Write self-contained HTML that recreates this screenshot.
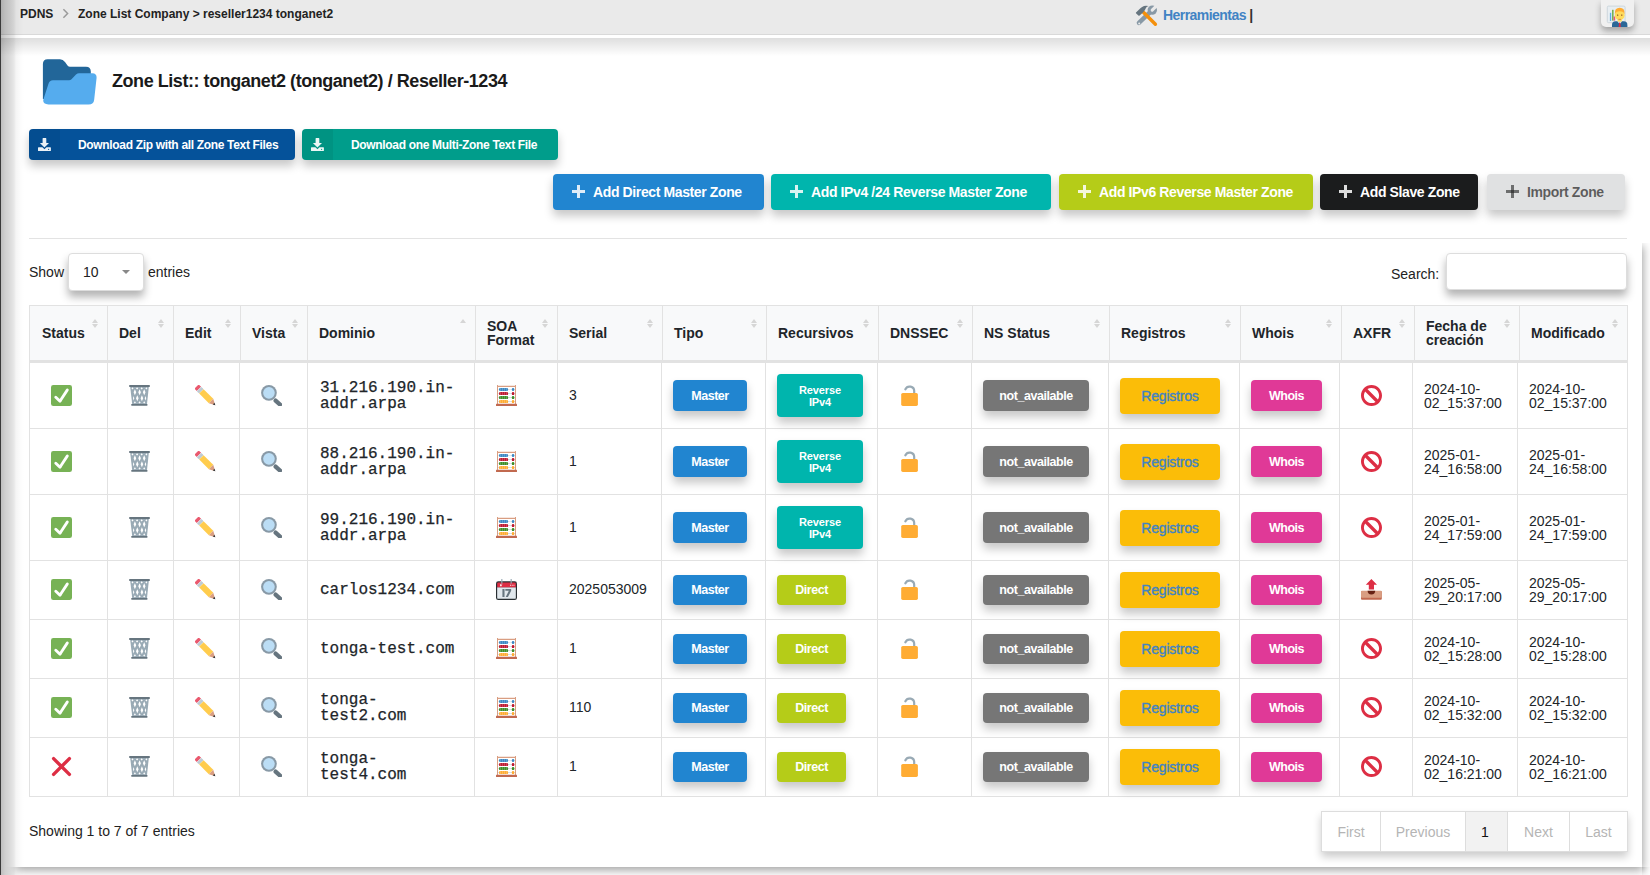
<!DOCTYPE html>
<html><head><meta charset="utf-8"><style>
*{box-sizing:border-box;margin:0;padding:0}
html,body{width:1650px;height:875px;overflow:hidden;background:#fff;font-family:"Liberation Sans",sans-serif;color:#212529;position:relative}
.abs{position:absolute}
svg.abs{overflow:visible}
#bg{left:0;top:0;width:1650px;height:875px;background:#fff}
#card{left:15px;top:38px;width:1627px;height:829px;background:#fff}
#rsh{left:1642px;top:243px;width:8px;height:632px;overflow:hidden}
#rsh i,#bsh i{position:absolute;display:block;background:#fff;box-shadow:1px 3px 9px rgba(0,0,0,.38)}
#bsh{left:0;top:867px;width:1650px;height:8px;overflow:hidden}
#lbar{left:0;top:0;width:1px;height:875px;background:#3a3a3a;z-index:50}
#lshadow{left:1px;top:0;width:24px;height:875px;background:linear-gradient(to right,rgba(0,0,0,.25) 0px,rgba(0,0,0,.19) 4px,rgba(0,0,0,.14) 9px,rgba(0,0,0,.09) 13px,rgba(0,0,0,.04) 15px,rgba(0,0,0,.015) 19px,rgba(0,0,0,0) 23px);z-index:40}
#hdr{left:0;top:0;width:1650px;height:35px;background:#eaeaea;border-bottom:1px solid #d9d9d9}
#hline{left:0;top:35px;width:1650px;height:3px;background:#fff}
#hshadow{left:0;top:38px;width:1650px;height:18px;background:linear-gradient(to bottom,rgba(0,0,0,.13),rgba(0,0,0,0))}
.bc{top:7px;font-size:12px;font-weight:bold;color:#222}
.btn{position:absolute;color:#fff;font-weight:bold;border-radius:4px;box-shadow:0 6px 10px rgba(0,0,0,.22);white-space:nowrap}
.dl .ic{position:absolute;left:0;top:0;width:31px;height:100%;background:rgba(0,0,0,.06);border-radius:4px 0 0 4px}
.dl .t{position:absolute;top:9px;font-size:12px;letter-spacing:-.33px}
.add .t{position:absolute;top:10px;font-size:14px;letter-spacing:-.38px}
.plus{position:absolute;width:13px;height:13px;opacity:.85}
.plus:before{content:"";position:absolute;left:5px;top:0;width:3px;height:13px;background:currentColor}
.plus:after{content:"";position:absolute;left:0;top:5px;width:13px;height:3px;background:currentColor}
#hr{left:29px;top:238px;width:1598px;height:1px;background:#e3e3e3}
.lbl{font-size:14px;color:#222}
#sel{left:68px;top:253px;width:76px;height:38px;border:1px solid #ddd;border-radius:4px;background:#fff;box-shadow:0 6px 9px rgba(0,0,0,.3)}
#srch{left:1446px;top:253px;width:181px;height:37px;border:1px solid #ddd;border-radius:4px;background:#fff;box-shadow:0 6px 9px rgba(0,0,0,.3)}
.hl{position:absolute;height:1px;background:#e2e2e2}
.vl{position:absolute;width:1px;background:#e2e2e2}
.th{position:absolute;font-size:14px;font-weight:bold;line-height:14px;color:#212529;white-space:nowrap}
.srt{position:absolute;width:0;height:0;border-left:3.5px solid transparent;border-right:3.5px solid transparent}
.srt.up{border-bottom:4px solid #d6d6d6}
.srt.dn{border-top:4px solid #d6d6d6}
.dom{position:absolute;font-family:"Liberation Mono",monospace;font-size:16px;line-height:16px;color:#212529;white-space:nowrap;-webkit-text-stroke:.25px #212529}
.td{position:absolute;font-size:14px;line-height:16px;color:#212529}
.dt{position:absolute;font-size:14px;line-height:14px;color:#212529;white-space:nowrap}
.sb{position:absolute;border-radius:4px;color:#fff;font-weight:bold;font-size:12.5px;text-align:center;box-shadow:0 6px 10px rgba(0,0,0,.22);display:flex;align-items:center;justify-content:center;letter-spacing:-.45px}
.sb.two{font-size:11px;line-height:12px;letter-spacing:-.1px}
.sb.reg{font-size:14px;font-weight:normal;color:#4183c4;letter-spacing:-.2px;-webkit-text-stroke:.35px #4183c4}
.pg{position:absolute;top:0;height:39px;line-height:41px;text-align:center;font-size:14px;color:#b5b5b5}
</style></head><body>
<svg width="0" height="0" style="position:absolute">
<symbol id="i-check" viewBox="0 0 36 36"><path fill="#77B255" d="M36 32a4 4 0 0 1-4 4H4a4 4 0 0 1-4-4V4a4 4 0 0 1 4-4h28a4 4 0 0 1 4 4v28z"/><path fill="#FFF" d="M29.28 6.362a2.502 2.502 0 0 0-3.458.736L14.936 23.877l-5.029-4.65a2.5 2.5 0 1 0-3.394 3.671l7.209 6.666c.48.445 1.09.665 1.696.665.673 0 1.534-.282 2.099-1.139.332-.506 12.5-19.27 12.5-19.27a2.5 2.5 0 0 0-.737-3.458z"/></symbol>
<symbol id="i-cross" viewBox="0 0 21 21"><path stroke="#DD2E44" stroke-width="3.4" stroke-linecap="round" d="M2.6 2.6L18.4 18.4M18.4 2.6L2.6 18.4"/></symbol>
<symbol id="i-trash" viewBox="0 0 21 21"><path fill="#99AAB5" d="M1.2 1.9H19.8L18 19H3.2Z"/><g fill="#fff"><path d="M5.9 4.2l1.3 3 -1.3 3 -1.3 -3zM10.6 4.2l1.3 3 -1.3 3 -1.3 -3zM15.2 4.2l1.3 3 -1.3 3 -1.3 -3zM8.3 10.2l1.3 3 -1.3 3 -1.3 -3zM12.9 10.2l1.3 3 -1.3 3 -1.3 -3zM4.4 11l.9 2.2 -.7 2.4 -.6 -2.4zM16.6 11l.6 2.2 -.6 2.4 -.9 -2.4zM3.5 2.2l1 1.2 -1 1.2 -1 -1.2zM8.1 2.2l1.1 1.2 -1.1 1.2 -1.1 -1.2zM12.7 2.2l1.1 1.2 -1.1 1.2 -1.1 -1.2zM17.4 2.2l1 1.2 -1 1.2 -1 -1.2zM5.9 16.2l1 1.2 -1 1.2 -1 -1.2zM10.6 16.2l1.1 1.2 -1.1 1.2 -1.1 -1.2zM15.2 16.2l1 1.2 -1 1.2 -1 -1.2z"/></g><path fill="#66757F" d="M.9 0H20.1Q21 0 21 1Q21 2 20.1 2H.9Q0 2 0 1Q0 0 .9 0ZM2.9 18.9H17.8Q18.6 18.9 18.6 19.85Q18.6 20.8 17.8 20.8H2.9Q2.1 20.8 2.1 19.85Q2.1 18.9 2.9 18.9Z"/></symbol>
<symbol id="i-pencil" viewBox="0 0 21 21"><g transform="translate(10.9 10.9) rotate(45)"><path fill="#EA596E" d="M-9.8 -3H-12Q-13.2 -3 -13.2 -1.8V1.8Q-13.2 3 -12 3H-9.8Z"/><path fill="#CCD6DD" d="M-9.8 -3.1H-6.4V3.1H-9.8Z"/><path fill="#99AAB5" d="M-8.9 -3.1h.5v6.2h-.5zM-7.6 -3.1h.5v6.2h-.5z" opacity=".6"/><path fill="#FFCC4D" d="M-6.4 -3.1H7.3V3.1H-6.4Z"/><path fill="#D99E82" d="M7.3 -3.1L13.2 0L7.3 3.1Z"/><path fill="#292F33" d="M11 -1.15L13.3 0L11 1.15Z"/></g></symbol>
<symbol id="i-mag" viewBox="0 0 21 21"><path stroke="#66757F" stroke-width="4.2" stroke-linecap="round" d="M14.6 15.6L19 19.6"/><circle fill="#8899A6" cx="7.95" cy="7.85" r="7.85"/><circle fill="#BBDDF5" cx="7.95" cy="7.85" r="5.8"/></symbol>
<symbol id="i-abacus" viewBox="0 0 21 21"><path fill="#D99E82" d="M1 0h1v19H1zM19 0h1v19h-1zM1 .8h19v1.1H1z"/><path fill="#CCD6DD" d="M2 4.2h17v.6H2zM2 8.3h17v.6H2zM2 12.3h17v.6H2zM2 16.3h17v.6H2z"/><rect fill="#3B88C3" x="3" y="3" width="9.1" height="3" rx="1.2"/><rect fill="#3B88C3" x="15.8" y="3" width="2.5" height="3" rx="1.2"/><rect fill="#BE1931" x="3" y="7.1" width="9.1" height="3" rx="1.2"/><rect fill="#BE1931" x="15.8" y="7.1" width="2.5" height="3" rx="1.2"/><rect fill="#3E8E28" x="3" y="11.1" width="9.1" height="3" rx="1.2"/><rect fill="#3E8E28" x="15.8" y="11.1" width="2.5" height="3" rx="1.2"/><rect fill="#FFAC33" x="3" y="15.1" width="9.1" height="3" rx="1.2"/><rect fill="#FFAC33" x="15.8" y="15.1" width="2.5" height="3" rx="1.2"/><path fill="#fff" opacity=".55" d="M4.65 3h.35v3h-.35zM6.45 3h.35v3h-.35zM8.25 3h.35v3h-.35zM10.05 3h.35v3h-.35zM4.65 7.1h.35v3h-.35zM6.45 7.1h.35v3h-.35zM8.25 7.1h.35v3h-.35zM10.05 7.1h.35v3h-.35zM4.65 11.1h.35v3h-.35zM6.45 11.1h.35v3h-.35zM8.25 11.1h.35v3h-.35zM10.05 11.1h.35v3h-.35zM4.65 15.1h.35v3h-.35zM6.45 15.1h.35v3h-.35zM8.25 15.1h.35v3h-.35zM10.05 15.1h.35v3h-.35z"/><rect fill="#C1694F" x="0" y="18.8" width="21" height="2.1" rx=".5"/></symbol>
<symbol id="i-cal" viewBox="0 0 36 36"><path fill="#292F33" d="M36 32a4 4 0 0 1-4 4H4a4 4 0 0 1-4-4V8a4 4 0 0 1 4-4h28a4 4 0 0 1 4 4v24z"/><path fill="#E1E8ED" d="M2 14h32v18a2 2 0 0 1-2 2H4a2 2 0 0 1-2-2z"/><path fill="#DD2E44" d="M2 8a2 2 0 0 1 2-2h28a2 2 0 0 1 2 2v6H2z"/><path fill="#FFF" d="M7 9h1.5v3.5H7zM9.5 9h1.2l-.8 3.5H8.8zM24 10h1.5v1.5H24zM27 10h1.5v1.5H27zM30 10h1.5v1.5H30z"/><path fill="#99AAB5" d="M9 0h2v8H9zM25 0h2v8h-2z"/><path fill="#66757F" d="M11 17h3.6v14H11zM16 17h10v3l-5.5 11h-3.8L22 20h-6z"/></symbol>
<symbol id="i-lock" viewBox="0 0 21 21"><path fill="none" stroke="#99AAB5" stroke-width="2.2" stroke-linecap="round" d="M6.4 4.3A4.6 4.6 0 0 1 15.2 6.3V9.5"/><rect fill="#FFAC33" x="2.2" y="8" width="16.7" height="12.9" rx="1.6"/></symbol>
<symbol id="i-noentry" viewBox="0 0 36 36"><path fill="#DD2E44" d="M18 0C8.059 0 0 8.059 0 18s8.059 18 18 18 18-8.059 18-18S27.941 0 18 0zm13 18c0 2.565-.753 4.95-2.035 6.965L11.036 7.036C13.05 5.753 15.435 5 18 5c7.18 0 13 5.821 13 13zM5 18c0-2.565.753-4.95 2.036-6.964l17.929 17.929A12.93 12.93 0 0 1 18 31c-7.179 0-13-5.82-13-13z"/></symbol>
<symbol id="i-outbox" viewBox="0 0 21 21"><rect fill="#C1694F" x="0" y="12" width="20.8" height="8.8" rx="1"/><rect fill="#D99E82" x="0" y="11.8" width="20.8" height="6.9" rx="1"/><path fill="#662113" d="M6.6 11.8H14.2Q14.2 15.4 10.4 15.4Q6.6 15.4 6.6 11.8Z"/><path fill="#DD2E44" d="M10.4 0L16 5.8H13V10.4H7.8V5.8H4.8Z"/></symbol>
</svg>
<div id="bg" class="abs"></div>
<div id="card" class="abs"></div>
<div id="rsh" class="abs"><i style="left:-1627px;top:0;width:1627px;height:624px"></i></div>
<div id="bsh" class="abs"><i style="left:15px;top:-629px;width:1627px;height:629px"></i></div>
<div id="lbar" class="abs"></div>
<div id="lshadow" class="abs"></div>
<div id="hdr" class="abs"></div>
<div id="hline" class="abs"></div>
<div id="hshadow" class="abs"></div>
<div class="abs bc" style="left:20px">PDNS</div>
<svg class="abs" style="left:62px;top:8px;width:8px;height:11px" viewBox="0 0 8 11"><path d="M1.4 1.2L5.6 5.5L1.4 9.8" fill="none" stroke="#9a9a9a" stroke-width="1.5"/></svg>
<div class="abs bc" style="left:78px">Zone List Company &gt; reseller1234 tonganet2</div>
<svg class="abs" style="left:1133px;top:3px;width:28px;height:26px" viewBox="0 0 28 26"><path d="M5.9 19.9L16.6 9.7" stroke="#8899A6" stroke-width="4.4" stroke-linecap="round"/><circle cx="19.3" cy="7.1" r="4.7" fill="#8899A6"/><path d="M19.2 7.2L23.5 2.9" stroke="#eaeaea" stroke-width="3.1" stroke-linecap="round"/><circle cx="6.2" cy="20.4" r="1" fill="#eaeaea"/><path d="M10.4 9.2L22.4 21.2" stroke="#F4900C" stroke-width="3.4" stroke-linecap="round"/><path fill="#66757F" d="M3 9.4Q2.6 10 3.2 10.6L5.4 12.6Q6 13 6.6 12.5L9.2 10.3L11.6 7.6Q12.4 6.2 12.9 5Q13.6 3.6 15.6 3.1Q13 2.3 11 3Q9 3.8 7.4 5.3Z"/></svg>
<div class="abs" style="left:1163px;top:7px;font-size:14px;font-weight:bold;color:#4183c4;letter-spacing:-.55px">Herramientas <span style="color:#333">|</span></div>
<div class="abs" style="left:1601px;top:0px;width:33px;height:27px;background:#f0f0f0;border-radius:0 0 5px 5px;box-shadow:0 4px 6px rgba(0,0,0,.3)"></div>
<svg class="abs" style="left:1601px;top:0;width:33px;height:27px" viewBox="0 0 33 27"><rect x="6.3" y="6.1" width="17.8" height="16.6" rx="1.2" fill="#E8EEF2" stroke="#C5D0D8" stroke-width=".8"/><rect x="8.9" y="12.8" width="1.3" height="8.2" fill="#5DADEC"/><rect x="11" y="9.8" width="1.6" height="10.8" fill="#77B255"/><rect x="12.6" y="16.5" width="1.6" height="4.1" fill="#EA596E"/><path d="M11 27V25Q11 21.3 14.6 21.3H22.8Q26.4 21.3 26.4 25V27Z" fill="#2A6797"/><path d="M16.4 21.3L18.7 24.3L21 21.3Z" fill="#fff"/><path d="M18.1 22.4H19.3L19.8 27H17.6Z" fill="#DD2E44"/><rect x="16.6" y="18.3" width="4.2" height="3.3" fill="#FFDC5D"/><circle cx="18.7" cy="15.2" r="4.9" fill="#FFDC5D"/><path d="M13.8 14.2Q13.4 7.8 18.7 7.8Q24 7.8 23.6 14.2Q22.6 11.3 18.7 11.2Q14.8 11.3 13.8 14.2Z" fill="#FFAC33"/><circle cx="16.7" cy="15.1" r=".65" fill="#662113"/><circle cx="20.8" cy="15.1" r=".65" fill="#662113"/><rect x="17.4" y="18.9" width="2.7" height=".7" fill="#C1694F"/></svg>
<svg class="abs" style="left:38px;top:55px;width:64px;height:54px" viewBox="0 0 64 54"><path fill="#226699" d="M4.9 9Q4.9 4.3 9.6 4.3H22Q25 4.3 27 7L29.5 10.5Q30.5 11.7 32 11.7H48Q52.8 11.7 52.8 16.5V44H4.9Z"/><path fill="#55ACEE" d="M15 25.3H31Q32.5 25.3 33.5 24.3L38 19.5Q39.5 18.2 41 18.2H54.3Q58.8 18.2 58.6 22.8L56.2 44.4Q55.8 49.4 50.6 49.4H10.5Q5 49.4 5.2 45L10.4 29Q11.5 25.3 15 25.3Z"/></svg>
<div class="abs" style="left:112px;top:71px;font-size:18px;letter-spacing:-.45px;font-weight:bold;color:#1a1a1a">Zone List:: tonganet2 (tonganet2) / Reseller-1234</div>

<div class="btn dl" style="left:29px;top:129px;width:266px;height:31px;background:#05529a"><div class="ic"></div><svg style="position:absolute;left:9px;top:9px;width:13px;height:13px" viewBox="0 0 13 13"><path fill="#fff" fill-opacity=".92" d="M4.6 .4Q4.6 0 5 0H7.9Q8.3 0 8.3 .4V5H11L6.45 9.6L1.9 5H4.6ZM0 9.8Q0 9.2 .6 9.2H4.4L6.45 11.2L8.5 9.2H12.3Q12.9 9.2 12.9 9.8V12.4Q12.9 13 12.3 13H.6Q0 13 0 12.4Z"/><circle fill="#05529a" cx="10.6" cy="11.3" r=".65"/></svg><span class="t" style="left:49px">Download Zip with all Zone Text Files</span></div>
<div class="btn dl" style="left:302px;top:129px;width:256px;height:31px;background:#009d8b"><div class="ic"></div><svg style="position:absolute;left:9px;top:9px;width:13px;height:13px" viewBox="0 0 13 13"><path fill="#fff" fill-opacity=".92" d="M4.6 .4Q4.6 0 5 0H7.9Q8.3 0 8.3 .4V5H11L6.45 9.6L1.9 5H4.6ZM0 9.8Q0 9.2 .6 9.2H4.4L6.45 11.2L8.5 9.2H12.3Q12.9 9.2 12.9 9.8V12.4Q12.9 13 12.3 13H.6Q0 13 0 12.4Z"/><circle fill="#009d8b" cx="10.6" cy="11.3" r=".65"/></svg><span class="t" style="left:49px">Download one Multi-Zone Text File</span></div>

<div class="btn add" style="left:553px;top:174px;width:211px;height:36px;background:#2185d0"><span class="plus" style="left:19px;top:11px"></span><span class="t" style="left:40px">Add Direct Master Zone</span></div>
<div class="btn add" style="left:771px;top:174px;width:280px;height:36px;background:#00b5ad"><span class="plus" style="left:19px;top:11px"></span><span class="t" style="left:40px">Add IPv4 /24 Reverse Master Zone</span></div>
<div class="btn add" style="left:1059px;top:174px;width:254px;height:36px;background:#b5cc18"><span class="plus" style="left:19px;top:11px"></span><span class="t" style="left:40px">Add IPv6 Reverse Master Zone</span></div>
<div class="btn add" style="left:1320px;top:174px;width:158px;height:36px;background:#1b1c1d"><span class="plus" style="left:19px;top:11px"></span><span class="t" style="left:40px">Add Slave Zone</span></div>
<div class="btn add" style="left:1487px;top:174px;width:138px;height:36px;background:#e0e1e2;color:rgba(0,0,0,.6)"><span class="plus" style="left:19px;top:11px"></span><span class="t" style="left:40px">Import Zone</span></div>

<div id="hr" class="abs"></div>

<div class="abs lbl" style="left:29px;top:264px">Show</div>
<div id="sel" class="abs"><span style="position:absolute;left:14px;top:10px;font-size:14px;color:#222">10</span><span style="position:absolute;left:53px;top:16px;width:0;height:0;border-left:4px solid transparent;border-right:4px solid transparent;border-top:4px solid #888"></span></div>
<div class="abs lbl" style="left:148px;top:264px">entries</div>
<div class="abs lbl" style="left:1391px;top:266px">Search:</div>
<div id="srch" class="abs"></div>
<div class="abs" style="left:29px;top:305px;width:1598px;height:55px;background:#f8f9fa"></div>
<div class="hl" style="top:305px;left:29px;width:1598px"></div><div class="hl" style="top:360px;left:29px;width:1598px;height:3px"></div><div class="hl" style="top:428px;left:29px;width:1598px"></div><div class="hl" style="top:494px;left:29px;width:1598px"></div><div class="hl" style="top:560px;left:29px;width:1598px"></div><div class="hl" style="top:619px;left:29px;width:1598px"></div><div class="hl" style="top:678px;left:29px;width:1598px"></div><div class="hl" style="top:737px;left:29px;width:1598px"></div><div class="hl" style="top:796px;left:29px;width:1598px"></div><div class="vl" style="left:29px;top:360px;height:437px"></div><div class="vl" style="left:107px;top:360px;height:437px"></div><div class="vl" style="left:173px;top:360px;height:437px"></div><div class="vl" style="left:239px;top:360px;height:437px"></div><div class="vl" style="left:307px;top:360px;height:437px"></div><div class="vl" style="left:474px;top:360px;height:437px"></div><div class="vl" style="left:557px;top:360px;height:437px"></div><div class="vl" style="left:661px;top:360px;height:437px"></div><div class="vl" style="left:765px;top:360px;height:437px"></div><div class="vl" style="left:877px;top:360px;height:437px"></div><div class="vl" style="left:971px;top:360px;height:437px"></div><div class="vl" style="left:1108px;top:360px;height:437px"></div><div class="vl" style="left:1239px;top:360px;height:437px"></div><div class="vl" style="left:1339px;top:360px;height:437px"></div><div class="vl" style="left:1412px;top:360px;height:437px"></div><div class="vl" style="left:1517px;top:360px;height:437px"></div><div class="vl" style="left:1627px;top:360px;height:437px"></div><div class="vl" style="left:29px;top:305px;height:55px"></div><div class="vl" style="left:107px;top:305px;height:55px"></div><div class="vl" style="left:173px;top:305px;height:55px"></div><div class="vl" style="left:240px;top:305px;height:55px"></div><div class="vl" style="left:307px;top:305px;height:55px"></div><div class="vl" style="left:475px;top:305px;height:55px"></div><div class="vl" style="left:557px;top:305px;height:55px"></div><div class="vl" style="left:662px;top:305px;height:55px"></div><div class="vl" style="left:766px;top:305px;height:55px"></div><div class="vl" style="left:878px;top:305px;height:55px"></div><div class="vl" style="left:972px;top:305px;height:55px"></div><div class="vl" style="left:1109px;top:305px;height:55px"></div><div class="vl" style="left:1240px;top:305px;height:55px"></div><div class="vl" style="left:1341px;top:305px;height:55px"></div><div class="vl" style="left:1414px;top:305px;height:55px"></div><div class="vl" style="left:1519px;top:305px;height:55px"></div><div class="vl" style="left:1627px;top:305px;height:55px"></div>
<div class="th" style="left:42px;top:326px">Status</div><div class="srt up" style="left:92px;top:319px"></div><div class="srt dn" style="left:92px;top:324px"></div><div class="th" style="left:119px;top:326px">Del</div><div class="srt up" style="left:158px;top:319px"></div><div class="srt dn" style="left:158px;top:324px"></div><div class="th" style="left:185px;top:326px">Edit</div><div class="srt up" style="left:225px;top:319px"></div><div class="srt dn" style="left:225px;top:324px"></div><div class="th" style="left:252px;top:326px">Vista</div><div class="srt up" style="left:292px;top:319px"></div><div class="srt dn" style="left:292px;top:324px"></div><div class="th" style="left:319px;top:326px">Dominio</div><div class="srt up" style="left:460px;top:319px"></div><div class="th" style="left:487px;top:319px">SOA<br>Format</div><div class="srt up" style="left:542px;top:319px"></div><div class="srt dn" style="left:542px;top:324px"></div><div class="th" style="left:569px;top:326px">Serial</div><div class="srt up" style="left:647px;top:319px"></div><div class="srt dn" style="left:647px;top:324px"></div><div class="th" style="left:674px;top:326px">Tipo</div><div class="srt up" style="left:751px;top:319px"></div><div class="srt dn" style="left:751px;top:324px"></div><div class="th" style="left:778px;top:326px">Recursivos</div><div class="srt up" style="left:863px;top:319px"></div><div class="srt dn" style="left:863px;top:324px"></div><div class="th" style="left:890px;top:326px">DNSSEC</div><div class="srt up" style="left:957px;top:319px"></div><div class="srt dn" style="left:957px;top:324px"></div><div class="th" style="left:984px;top:326px">NS Status</div><div class="srt up" style="left:1094px;top:319px"></div><div class="srt dn" style="left:1094px;top:324px"></div><div class="th" style="left:1121px;top:326px">Registros</div><div class="srt up" style="left:1225px;top:319px"></div><div class="srt dn" style="left:1225px;top:324px"></div><div class="th" style="left:1252px;top:326px">Whois</div><div class="srt up" style="left:1326px;top:319px"></div><div class="srt dn" style="left:1326px;top:324px"></div><div class="th" style="left:1353px;top:326px">AXFR</div><div class="srt up" style="left:1399px;top:319px"></div><div class="srt dn" style="left:1399px;top:324px"></div><div class="th" style="left:1426px;top:319px">Fecha de<br>creaci&oacute;n</div><div class="srt up" style="left:1504px;top:319px"></div><div class="srt dn" style="left:1504px;top:324px"></div><div class="th" style="left:1531px;top:326px">Modificado</div><div class="srt up" style="left:1612px;top:319px"></div><div class="srt dn" style="left:1612px;top:324px"></div>
<svg class="abs" style="left:51px;top:385px;width:21px;height:21px"><use href="#i-check"/></svg><svg class="abs" style="left:129px;top:385px;width:21px;height:21px"><use href="#i-trash"/></svg><svg class="abs" style="left:195px;top:385px;width:21px;height:21px"><use href="#i-pencil"/></svg><svg class="abs" style="left:261px;top:385px;width:21px;height:21px"><use href="#i-mag"/></svg><div class="dom" style="left:320px;top:380px">31.216.190.in-<br>addr.arpa</div><svg class="abs" style="left:496px;top:385px;width:21px;height:21px"><use href="#i-abacus"/></svg><div class="td" style="left:569px;top:387px">3</div><div class="sb" style="left:673px;top:380px;width:74px;height:31px;background:#2185d0"><span>Master</span></div><div class="sb two" style="left:777px;top:374px;width:86px;height:43px;background:#00b5ad"><span>Reverse<br>IPv4</span></div><svg class="abs" style="left:899px;top:385px;width:21px;height:21px"><use href="#i-lock"/></svg><div class="sb" style="left:983px;top:380px;width:106px;height:31px;background:#767676"><span>not_available</span></div><div class="sb reg" style="left:1120px;top:378px;width:100px;height:36px;background:#fbbd08"><span>Registros</span></div><div class="sb" style="left:1251px;top:380px;width:71px;height:31px;background:#e03997"><span>Whois</span></div><svg class="abs" style="left:1361px;top:385px;width:21px;height:21px"><use href="#i-noentry"/></svg><div class="dt" style="left:1424px;top:382px">2024-10-<br>02_15:37:00</div><div class="dt" style="left:1529px;top:382px">2024-10-<br>02_15:37:00</div>
<svg class="abs" style="left:51px;top:451px;width:21px;height:21px"><use href="#i-check"/></svg><svg class="abs" style="left:129px;top:451px;width:21px;height:21px"><use href="#i-trash"/></svg><svg class="abs" style="left:195px;top:451px;width:21px;height:21px"><use href="#i-pencil"/></svg><svg class="abs" style="left:261px;top:451px;width:21px;height:21px"><use href="#i-mag"/></svg><div class="dom" style="left:320px;top:446px">88.216.190.in-<br>addr.arpa</div><svg class="abs" style="left:496px;top:451px;width:21px;height:21px"><use href="#i-abacus"/></svg><div class="td" style="left:569px;top:453px">1</div><div class="sb" style="left:673px;top:446px;width:74px;height:31px;background:#2185d0"><span>Master</span></div><div class="sb two" style="left:777px;top:440px;width:86px;height:43px;background:#00b5ad"><span>Reverse<br>IPv4</span></div><svg class="abs" style="left:899px;top:451px;width:21px;height:21px"><use href="#i-lock"/></svg><div class="sb" style="left:983px;top:446px;width:106px;height:31px;background:#767676"><span>not_available</span></div><div class="sb reg" style="left:1120px;top:444px;width:100px;height:36px;background:#fbbd08"><span>Registros</span></div><div class="sb" style="left:1251px;top:446px;width:71px;height:31px;background:#e03997"><span>Whois</span></div><svg class="abs" style="left:1361px;top:451px;width:21px;height:21px"><use href="#i-noentry"/></svg><div class="dt" style="left:1424px;top:448px">2025-01-<br>24_16:58:00</div><div class="dt" style="left:1529px;top:448px">2025-01-<br>24_16:58:00</div>
<svg class="abs" style="left:51px;top:517px;width:21px;height:21px"><use href="#i-check"/></svg><svg class="abs" style="left:129px;top:517px;width:21px;height:21px"><use href="#i-trash"/></svg><svg class="abs" style="left:195px;top:517px;width:21px;height:21px"><use href="#i-pencil"/></svg><svg class="abs" style="left:261px;top:517px;width:21px;height:21px"><use href="#i-mag"/></svg><div class="dom" style="left:320px;top:512px">99.216.190.in-<br>addr.arpa</div><svg class="abs" style="left:496px;top:517px;width:21px;height:21px"><use href="#i-abacus"/></svg><div class="td" style="left:569px;top:519px">1</div><div class="sb" style="left:673px;top:512px;width:74px;height:31px;background:#2185d0"><span>Master</span></div><div class="sb two" style="left:777px;top:506px;width:86px;height:43px;background:#00b5ad"><span>Reverse<br>IPv4</span></div><svg class="abs" style="left:899px;top:517px;width:21px;height:21px"><use href="#i-lock"/></svg><div class="sb" style="left:983px;top:512px;width:106px;height:31px;background:#767676"><span>not_available</span></div><div class="sb reg" style="left:1120px;top:510px;width:100px;height:36px;background:#fbbd08"><span>Registros</span></div><div class="sb" style="left:1251px;top:512px;width:71px;height:31px;background:#e03997"><span>Whois</span></div><svg class="abs" style="left:1361px;top:517px;width:21px;height:21px"><use href="#i-noentry"/></svg><div class="dt" style="left:1424px;top:514px">2025-01-<br>24_17:59:00</div><div class="dt" style="left:1529px;top:514px">2025-01-<br>24_17:59:00</div>
<svg class="abs" style="left:51px;top:579px;width:21px;height:21px"><use href="#i-check"/></svg><svg class="abs" style="left:129px;top:579px;width:21px;height:21px"><use href="#i-trash"/></svg><svg class="abs" style="left:195px;top:579px;width:21px;height:21px"><use href="#i-pencil"/></svg><svg class="abs" style="left:261px;top:579px;width:21px;height:21px"><use href="#i-mag"/></svg><div class="dom" style="left:320px;top:582px">carlos1234.com</div><svg class="abs" style="left:496px;top:579px;width:21px;height:21px"><use href="#i-cal"/></svg><div class="td" style="left:569px;top:581px">2025053009</div><div class="sb" style="left:673px;top:575px;width:74px;height:30px;background:#2185d0"><span>Master</span></div><div class="sb" style="left:777px;top:575px;width:69px;height:30px;background:#b5cc18"><span>Direct</span></div><svg class="abs" style="left:899px;top:579px;width:21px;height:21px"><use href="#i-lock"/></svg><div class="sb" style="left:983px;top:575px;width:106px;height:30px;background:#767676"><span>not_available</span></div><div class="sb reg" style="left:1120px;top:572px;width:100px;height:36px;background:#fbbd08"><span>Registros</span></div><div class="sb" style="left:1251px;top:575px;width:71px;height:30px;background:#e03997"><span>Whois</span></div><svg class="abs" style="left:1361px;top:579px;width:21px;height:21px"><use href="#i-outbox"/></svg><div class="dt" style="left:1424px;top:576px">2025-05-<br>29_20:17:00</div><div class="dt" style="left:1529px;top:576px">2025-05-<br>29_20:17:00</div>
<svg class="abs" style="left:51px;top:638px;width:21px;height:21px"><use href="#i-check"/></svg><svg class="abs" style="left:129px;top:638px;width:21px;height:21px"><use href="#i-trash"/></svg><svg class="abs" style="left:195px;top:638px;width:21px;height:21px"><use href="#i-pencil"/></svg><svg class="abs" style="left:261px;top:638px;width:21px;height:21px"><use href="#i-mag"/></svg><div class="dom" style="left:320px;top:641px">tonga-test.com</div><svg class="abs" style="left:496px;top:638px;width:21px;height:21px"><use href="#i-abacus"/></svg><div class="td" style="left:569px;top:640px">1</div><div class="sb" style="left:673px;top:634px;width:74px;height:30px;background:#2185d0"><span>Master</span></div><div class="sb" style="left:777px;top:634px;width:69px;height:30px;background:#b5cc18"><span>Direct</span></div><svg class="abs" style="left:899px;top:638px;width:21px;height:21px"><use href="#i-lock"/></svg><div class="sb" style="left:983px;top:634px;width:106px;height:30px;background:#767676"><span>not_available</span></div><div class="sb reg" style="left:1120px;top:631px;width:100px;height:36px;background:#fbbd08"><span>Registros</span></div><div class="sb" style="left:1251px;top:634px;width:71px;height:30px;background:#e03997"><span>Whois</span></div><svg class="abs" style="left:1361px;top:638px;width:21px;height:21px"><use href="#i-noentry"/></svg><div class="dt" style="left:1424px;top:635px">2024-10-<br>02_15:28:00</div><div class="dt" style="left:1529px;top:635px">2024-10-<br>02_15:28:00</div>
<svg class="abs" style="left:51px;top:697px;width:21px;height:21px"><use href="#i-check"/></svg><svg class="abs" style="left:129px;top:697px;width:21px;height:21px"><use href="#i-trash"/></svg><svg class="abs" style="left:195px;top:697px;width:21px;height:21px"><use href="#i-pencil"/></svg><svg class="abs" style="left:261px;top:697px;width:21px;height:21px"><use href="#i-mag"/></svg><div class="dom" style="left:320px;top:692px">tonga-<br>test2.com</div><svg class="abs" style="left:496px;top:697px;width:21px;height:21px"><use href="#i-abacus"/></svg><div class="td" style="left:569px;top:699px">110</div><div class="sb" style="left:673px;top:693px;width:74px;height:30px;background:#2185d0"><span>Master</span></div><div class="sb" style="left:777px;top:693px;width:69px;height:30px;background:#b5cc18"><span>Direct</span></div><svg class="abs" style="left:899px;top:697px;width:21px;height:21px"><use href="#i-lock"/></svg><div class="sb" style="left:983px;top:693px;width:106px;height:30px;background:#767676"><span>not_available</span></div><div class="sb reg" style="left:1120px;top:690px;width:100px;height:36px;background:#fbbd08"><span>Registros</span></div><div class="sb" style="left:1251px;top:693px;width:71px;height:30px;background:#e03997"><span>Whois</span></div><svg class="abs" style="left:1361px;top:697px;width:21px;height:21px"><use href="#i-noentry"/></svg><div class="dt" style="left:1424px;top:694px">2024-10-<br>02_15:32:00</div><div class="dt" style="left:1529px;top:694px">2024-10-<br>02_15:32:00</div>
<svg class="abs" style="left:51px;top:756px;width:21px;height:21px"><use href="#i-cross"/></svg><svg class="abs" style="left:129px;top:756px;width:21px;height:21px"><use href="#i-trash"/></svg><svg class="abs" style="left:195px;top:756px;width:21px;height:21px"><use href="#i-pencil"/></svg><svg class="abs" style="left:261px;top:756px;width:21px;height:21px"><use href="#i-mag"/></svg><div class="dom" style="left:320px;top:751px">tonga-<br>test4.com</div><svg class="abs" style="left:496px;top:756px;width:21px;height:21px"><use href="#i-abacus"/></svg><div class="td" style="left:569px;top:758px">1</div><div class="sb" style="left:673px;top:752px;width:74px;height:30px;background:#2185d0"><span>Master</span></div><div class="sb" style="left:777px;top:752px;width:69px;height:30px;background:#b5cc18"><span>Direct</span></div><svg class="abs" style="left:899px;top:756px;width:21px;height:21px"><use href="#i-lock"/></svg><div class="sb" style="left:983px;top:752px;width:106px;height:30px;background:#767676"><span>not_available</span></div><div class="sb reg" style="left:1120px;top:749px;width:100px;height:36px;background:#fbbd08"><span>Registros</span></div><div class="sb" style="left:1251px;top:752px;width:71px;height:30px;background:#e03997"><span>Whois</span></div><svg class="abs" style="left:1361px;top:756px;width:21px;height:21px"><use href="#i-noentry"/></svg><div class="dt" style="left:1424px;top:753px">2024-10-<br>02_16:21:00</div><div class="dt" style="left:1529px;top:753px">2024-10-<br>02_16:21:00</div>
<div class="abs lbl" style="left:29px;top:823px">Showing 1 to 7 of 7 entries</div>
<div class="abs" id="pag" style="left:1321px;top:811px;width:307px;height:41px;border:1px solid #ddd;background:#fff;box-shadow:0 5px 8px rgba(0,0,0,.2)">
<div class="pg" style="left:0;width:58px">First</div>
<div class="pg" style="left:58px;width:85px;border-left:1px solid #ddd">Previous</div>
<div class="pg act" style="left:143px;width:42px;text-indent:-3px;border-left:1px solid #ddd;background:#f2f2f2;color:#111">1</div>
<div class="pg" style="left:185px;width:62px;border-left:1px solid #ddd">Next</div>
<div class="pg" style="left:247px;width:58px;border-left:1px solid #ddd">Last</div>
</div>
</body></html>
